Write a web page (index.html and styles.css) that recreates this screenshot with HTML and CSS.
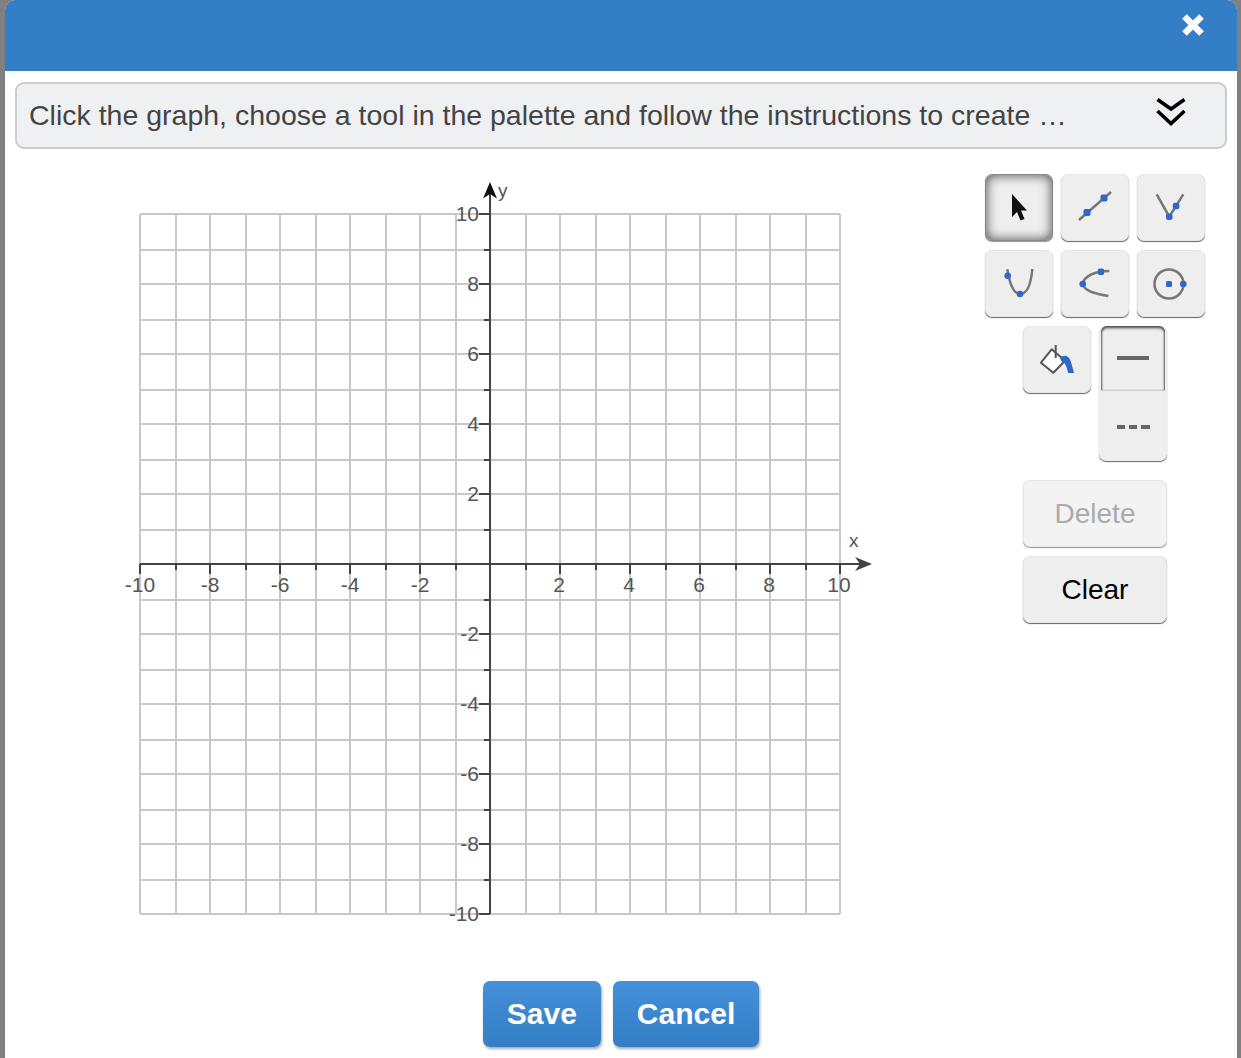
FILE: index.html
```html
<!DOCTYPE html>
<html lang="en">

<head>
    <meta charset="UTF-8">
    <meta name="viewport" content="width=device-width, initial-scale=1.0">
    <title>Graph question</title>
    <link rel="stylesheet" href="styles.css">
</head>

<body>
    <div class="modal">
        <div class="modal-header">
            <button class="close-btn" aria-label="Close">
                <svg width="24" height="24" viewBox="0 0 24 24">
                    <path d="M3.5 3.5L20.5 20.5M20.5 3.5L3.5 20.5" stroke="#fff" stroke-width="6.5" fill="none" />
                </svg>
            </button>
        </div>
        <div class="instructions">
            <span class="instructions-text">Click the graph, choose a tool in the palette and follow the instructions to create …</span>
            <svg class="expand-icon" width="30" height="30" viewBox="0 0 30 30">
                <path d="M1.5 1.5L15 11L28.5 1.5M1.5 13L15 25.5L28.5 13" stroke="#000" stroke-width="3.6" fill="none" />
            </svg>
        </div>
        <div class="workspace">
            <svg class="graph" width="960" height="795" viewBox="5 165 960 795">
                <path class="grid-lines" d="M140 214V914M176 214V914M210 214V914M246 214V914M280 214V914M316 214V914M350 214V914M386 214V914M420 214V914M456 214V914M490 214V914M526 214V914M560 214V914M596 214V914M630 214V914M666 214V914M700 214V914M736 214V914M770 214V914M806 214V914M840 214V914
                    M140 214H840M140 250H840M140 284H840M140 320H840M140 354H840M140 390H840M140 424H840M140 460H840M140 494H840M140 530H840M140 564H840M140 600H840M140 634H840M140 670H840M140 704H840M140 740H840M140 774H840M140 810H840M140 844H840M140 880H840M140 914H840" />
                <path class="axis-lines" d="M140 564H862M490 914V190
                    M140 564V574M176 564V570M210 564V574M246 564V570M280 564V574M316 564V570M350 564V574M386 564V570M420 564V574M456 564V570M526 564V570M560 564V574M596 564V570M630 564V574M666 564V570M700 564V574M736 564V570M770 564V574M806 564V570M840 564V574
                    M479 214H490M484 250H490M479 284H490M484 320H490M479 354H490M484 390H490M479 424H490M484 460H490M479 494H490M484 530H490M484 600H490M479 634H490M484 670H490M479 704H490M484 740H490M479 774H490M484 810H490M479 844H490M484 880H490M479 914H490" />
                <path class="axis-head axis-head-y" d="M490 182L497 198.5L490 194L483 198.5Z" />
                <path class="axis-head" d="M872 564L855 571L860 564L855 557Z" />
                <g class="x-labels">
                    <text x="140" y="592">-10</text>
                    <text x="210" y="592">-8</text>
                    <text x="280" y="592">-6</text>
                    <text x="350" y="592">-4</text>
                    <text x="420" y="592">-2</text>
                    <text x="559" y="592">2</text>
                    <text x="629" y="592">4</text>
                    <text x="699" y="592">6</text>
                    <text x="769" y="592">8</text>
                    <text x="839" y="592">10</text>
                </g>
                <g class="y-labels">
                    <text x="479" y="221">10</text>
                    <text x="479" y="291">8</text>
                    <text x="479" y="361">6</text>
                    <text x="479" y="431">4</text>
                    <text x="479" y="501">2</text>
                    <text x="479" y="641">-2</text>
                    <text x="479" y="711">-4</text>
                    <text x="479" y="781">-6</text>
                    <text x="479" y="851">-8</text>
                    <text x="479" y="921">-10</text>
                </g>
                <text class="axis-name" x="849" y="547">x</text>
                <text class="axis-name" x="498" y="197">y</text>
            </svg>

            <div class="palette">
                <div class="tool-row">
                    <button class="tool tool-selected" aria-label="Select">
                        <svg width="20" height="30" viewBox="0 0 20 30">
                            <path d="M3 1V24L8 19L11.5 27.5L15.5 26L12 17.5H18Z" fill="#111" />
                        </svg>
                    </button>
                    <button class="tool" aria-label="Line">
                        <svg width="36" height="36" viewBox="0 0 36 36">
                            <path class="icon-line" d="M2 30L34 2" />
                            <rect class="icon-dot" x="6.5" y="19" width="7" height="7" rx="2" />
                            <rect class="icon-dot" x="23.5" y="4.5" width="7" height="7" rx="2" />
                        </svg>
                    </button>
                    <button class="tool" aria-label="Absolute value">
                        <svg width="36" height="36" viewBox="0 0 36 36">
                            <path class="icon-line" d="M3.7 4.3L16.3 26.7L30.3 4.3" />
                            <rect class="icon-dot" x="13" y="23.5" width="6.5" height="6.5" rx="2" />
                            <rect class="icon-dot" x="19.8" y="12.8" width="6.5" height="6.5" rx="2" />
                        </svg>
                    </button>
                </div>
                <div class="tool-row">
                    <button class="tool" aria-label="Parabola">
                        <svg width="36" height="36" viewBox="0 0 36 36">
                            <path class="icon-line" d="M6.3 3.3C9 20 13 28 19 28C26 28 30 18 31.3 3" />
                            <circle class="icon-dot" cx="6.7" cy="9.7" r="3.3" />
                            <circle class="icon-dot" cx="19" cy="28" r="3.3" />
                        </svg>
                    </button>
                    <button class="tool" aria-label="Horizontal parabola">
                        <svg width="36" height="36" viewBox="0 0 36 36">
                            <path class="icon-line" d="M32.3 5C18 5 7 10 5.7 18C7 24 18 28 31.3 30" />
                            <rect class="icon-dot" x="20.7" y="2.5" width="6.5" height="6.5" rx="2" />
                            <circle class="icon-dot" cx="5.7" cy="18" r="3.3" />
                        </svg>
                    </button>
                    <button class="tool" aria-label="Circle">
                        <svg width="36" height="36" viewBox="0 0 36 36">
                            <circle class="icon-line" cx="16" cy="18" r="14.5" />
                            <rect class="icon-dot" x="13" y="15" width="6" height="6" rx="1.5" />
                            <circle class="icon-dot" cx="30.3" cy="18" r="3.3" />
                        </svg>
                    </button>
                </div>
                <div class="tool-row tool-row-style">
                    <button class="tool" aria-label="Fill">
                        <svg width="36" height="36" viewBox="0 0 36 36">
                            <path d="M2 20.7L12.7 7.3L26 18.7L14.3 30.7Z" fill="#fff" stroke="#555" stroke-width="2" stroke-linejoin="round" />
                            <path d="M16.7 3V16" stroke="#555" stroke-width="2" />
                            <path d="M21 16C25 12 30 13 32 20L35 31H29C28 25 26 20 22.5 19.5Z" fill="#2f66c9" />
                        </svg>
                    </button>
                    <div class="line-style">
                        <button class="line-option line-option-selected" aria-label="Solid line">
                            <span class="line-solid"></span>
                        </button>
                        <button class="line-option" aria-label="Dashed line">
                            <span class="line-dashed"></span>
                        </button>
                    </div>
                </div>
                <div class="action-group">
                    <button class="action-btn action-btn-disabled">Delete</button>
                    <button class="action-btn">Clear</button>
                </div>
            </div>
        </div>
        <div class="modal-footer">
            <button class="primary-btn">Save</button>
            <button class="primary-btn">Cancel</button>
        </div>
    </div>
</body>

</html>
```

FILE: styles.css
```css
body {
    margin: 0;
    height: 1058px;
    overflow: hidden;
    background-color: #808080;
    font-family: 'Liberation Sans', Arial, sans-serif;
}

button {
    font-family: inherit;
    cursor: pointer;
}

.modal {
    margin: 0 4px 0 5px;
    height: 1058px;
    background-color: #fff;
    border-radius: 10px 10px 0 0;
    overflow: hidden;
}

.modal-header {
    display: flex;
    justify-content: flex-end;
    align-items: flex-start;
    height: 71px;
    padding: 13px 32px 0 0;
    box-sizing: border-box;
    background-color: #337ec4;
}

.close-btn {
    display: flex;
    padding: 0;
    background: none;
    border: none;
}

.instructions {
    display: flex;
    justify-content: space-between;
    align-items: center;
    height: 67px;
    margin: 11px 10px 0;
    padding: 0 39px 0 12px;
    box-sizing: border-box;
    background-color: #eff0f2;
    border: 2px solid #ccc;
    border-radius: 9px;
}

.instructions-text {
    font-size: 28.5px;
    color: #444;
}

.expand-icon {
    margin-bottom: 6px;
}

.workspace {
    display: flex;
    margin-top: 16px;
}

.graph {
    flex: none;
}

.grid-lines {
    fill: none;
    stroke: #c8c8c8;
    stroke-width: 2;
}

.axis-lines {
    fill: none;
    stroke: #444;
    stroke-width: 2;
}

.axis-head {
    fill: #444;
}

.axis-head-y {
    fill: #111;
}

.x-labels text,
.y-labels text {
    fill: #555;
    font-size: 21px;
}

.x-labels text {
    text-anchor: middle;
}

.y-labels text {
    text-anchor: end;
}

.axis-name {
    fill: #555;
    font-size: 19px;
}

.palette {
    display: flex;
    flex-direction: column;
    gap: 9px;
    width: 220px;
    margin: 9px 0 0 20px;
}

.tool-row {
    display: flex;
    gap: 8px;
}

.tool-row-style {
    align-items: flex-start;
    margin-left: 38px;
}

.tool {
    display: flex;
    justify-content: center;
    align-items: center;
    width: 68px;
    height: 67px;
    padding: 0;
    background-color: #eee;
    border: 1px solid #e6e6e6;
    border-radius: 7px;
    box-shadow: 0 1px 1px #666;
}

.tool-selected {
    box-shadow: inset 0 0 12px #444, 0 1px 1px #999;
    border-color: #888;
}

.icon-line {
    fill: none;
    stroke: #777;
    stroke-width: 2.5;
}

.icon-dot {
    fill: #2f66c9;
}

.line-style {
    display: flex;
    flex-direction: column;
    width: 68px;
    background-color: #eee;
    border-radius: 7px;
    box-shadow: 0 1px 1px #666;
}

.line-option {
    display: flex;
    justify-content: center;
    align-items: center;
    height: 69px;
    padding: 0;
    background: none;
    border: none;
}

.line-option-selected {
    width: 64px;
    height: 64px;
    margin: 0 2px 2px;
    border-radius: 6px 6px 0 0;
    box-shadow: inset 0 3px 3px -1px #444, inset 2px 0 2px -1px #666, inset -2px 0 2px -1px #666, 0 1px 0 #ccc;
}

.line-solid {
    width: 32px;
    height: 4px;
    background-color: #666;
}

.line-dashed {
    width: 33px;
    height: 4px;
    background: repeating-linear-gradient(90deg, #666 0, #666 8.5px, transparent 8.5px, transparent 12px);
}

.action-group {
    display: flex;
    flex-direction: column;
    gap: 9px;
    width: 144px;
    margin: 10px 0 0 38px;
}

.action-btn {
    height: 67px;
    padding: 0;
    font-size: 28px;
    color: #000;
    background-color: #eee;
    border: 1px solid #e6e6e6;
    border-radius: 7px;
    box-shadow: 0 1px 1px #666;
}

.action-btn-disabled {
    color: #aaa;
    background-color: #f3f3f3;
    box-shadow: 0 1px 1px #999;
}

.modal-footer {
    display: flex;
    justify-content: center;
    gap: 12px;
    margin-top: 21px;
}

.primary-btn {
    height: 66px;
    padding: 0 24px;
    font-size: 30px;
    font-weight: bold;
    color: #fff;
    background: linear-gradient(#4490da, #337ec4);
    border: none;
    border-radius: 7px;
    box-shadow: 1px 2px 3px rgba(0, 0, 0, 0.35);
}
```
